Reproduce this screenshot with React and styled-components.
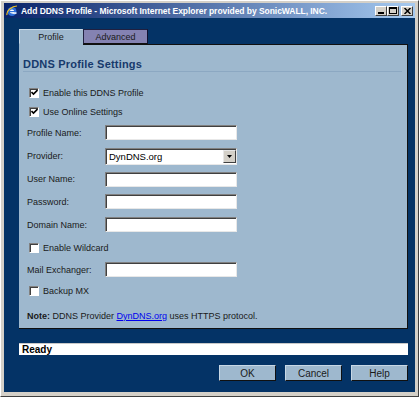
import styled, { createGlobalStyle } from "styled-components";

const GlobalStyle = createGlobalStyle`
    html, body {
        margin: 0;
        padding: 0;
        background: #d4d0c8;
    }
    body {
        font-family: "Liberation Sans", Arial, sans-serif;
        font-size: 9px;
        color: #1a1a1a;
    }
`

const Frame = styled.div`
    width: 419px;
    height: 397px;
    box-sizing: border-box;
    display: flex;
    flex-direction: column;
    background: #d4d0c8;
    padding: 2px 3px 4px 3px;
    border-top: 1px solid #ffffff;
    border-left: 1px solid #ffffff;
    border-right: 1px solid #404040;
    border-bottom: 1px solid #404040;
`

const TitleBar = styled.div`
    height: 15px;
    display: flex;
    align-items: center;
    background: linear-gradient(to right, #0a246a, #a6caf0);
    padding: 0 2px 0 2px;
    gap: 3px;
`

const TitleText = styled.div`
    flex: 1;
    color: #ffffff;
    font-weight: bold;
    font-size: 8.5px;
    letter-spacing: -0.05px;
    white-space: nowrap;
`

const WinButtons = styled.div`
    display: flex;
    align-items: center;
`

const WinButton = styled.div`
    width: 12px;
    height: 10px;
    box-sizing: border-box;
    background: #d4d0c8;
    border-top: 1px solid #ffffff;
    border-left: 1px solid #ffffff;
    border-right: 1px solid #404040;
    border-bottom: 1px solid #404040;
    margin-left: ${(props) => props.gap ? "2px" : "0"};
    display: flex;
    align-items: center;
    justify-content: center;
`

const Body = styled.div`
    flex: 1;
    background: #043366;
    padding: 11px 7px 0 15px;
    display: flex;
    flex-direction: column;
`

const Tabs = styled.div`
    display: flex;
    height: 15px;
`

const Tab = styled.div`
    width: ${(props) => props.w}px;
    box-sizing: border-box;
    display: flex;
    align-items: center;
    justify-content: center;
    padding-top: 1px;
    font-size: 9px;
    color: #1a1a1a;
    background: ${(props) => props.active ? "#9eb8ce" : "#8482b2"};
    border-top: 1px solid ${(props) => props.active ? "#c8d8e6" : "#202040"};
    border-left: 1px solid ${(props) => props.active ? "#c8d8e6" : "#202040"};
    border-right: 1px solid ${(props) => props.active ? "#9eb8ce" : "#101030"};
    border-bottom: 1px solid ${(props) => props.active ? "#9eb8ce" : "#101010"};
`

const Panel = styled.div`
    height: 285px;
    box-sizing: border-box;
    background: #9eb8ce;
    border-right: 1px solid #101010;
    border-bottom: 1px solid #101010;
    display: flex;
    flex-direction: column;
`

const PanelTopLine = styled.div`
    height: 1px;
    margin-left: 64px;
    background: #101010;
`

const Heading = styled.div`
    margin: 13px 5px 0 4px;
    height: 13px;
    border-bottom: 1px solid #8ca8c2;
    color: #173a6c;
    font-weight: bold;
    font-size: 11px;
    letter-spacing: 0.2px;
    line-height: 12px;
`

const Form = styled.div`
    margin-top: 11px;
    display: flex;
    flex-direction: column;
`

const Row = styled.div`
    height: ${(props) => props.h}px;
    display: flex;
    align-items: center;
    padding-left: ${(props) => props.check ? "10px" : "8px"};
    margin-top: ${(props) => props.mt || 0}px;
    white-space: pre;
`

const Check = styled.span`
    width: 10px;
    height: 10px;
    box-sizing: border-box;
    background: #ffffff;
    border-top: 1px solid #808080;
    border-left: 1px solid #808080;
    border-right: 1px solid #ffffff;
    border-bottom: 1px solid #ffffff;
    box-shadow: inset 1px 1px 0 #404040;
    display: flex;
    align-items: center;
    justify-content: center;
    margin-right: 4px;
`

const Label = styled.span`
    width: 78px;
    flex-shrink: 0;
`

const Input = styled.div`
    width: 132px;
    height: 15px;
    box-sizing: border-box;
    background: #ffffff;
    border-top: 1px solid #808080;
    border-left: 1px solid #808080;
    border-right: 1px solid #e8e8e8;
    border-bottom: 1px solid #e8e8e8;
    box-shadow: inset 1px 1px 0 #404040;
`

const Select = styled(Input)`
    height: 17px;
    display: flex;
    align-items: center;
    padding-left: 3px;
    font-size: 9.5px;
    color: #000;
`

const SelectValue = styled.span`
    flex: 1;
`

const SelectArrow = styled.span`
    width: 13px;
    height: 13px;
    box-sizing: border-box;
    background: #d4d0c8;
    border-top: 1px solid #e8e8e8;
    border-left: 1px solid #e8e8e8;
    border-right: 1px solid #404040;
    border-bottom: 1px solid #404040;
    display: flex;
    align-items: center;
    justify-content: center;
`

const Link = styled.a`
    color: #0000ee;
    text-decoration: underline;
`

const StatusBar = styled.div`
    margin-top: 14px;
    height: 11px;
    background: #ffffff;
    border-top: 1px solid #c8c8c8;
    display: flex;
    align-items: center;
    padding-left: 3px;
    font-size: 10px;
    font-weight: bold;
    color: #000;
`

const ButtonRow = styled.div`
    margin-top: 10px;
    display: flex;
    justify-content: flex-end;
    gap: 9px;
`

const Button = styled.div`
    width: 57px;
    height: 16px;
    box-sizing: border-box;
    background: #9eb8ce;
    border-top: 1px solid #c8d8e6;
    border-left: 1px solid #c8d8e6;
    border-right: 1px solid #101010;
    border-bottom: 1px solid #101010;
    display: flex;
    align-items: center;
    justify-content: center;
    font-size: 10px;
    color: #1a1a1a;
`

function CheckMark() {
    return (
        <svg width="7" height="7" viewBox="0 0 7 7">
            <path d="M0.5 3 L2.5 5 L6.5 1" stroke="#000" strokeWidth="1.6" fill="none" />
        </svg>
    )
}

function CheckRow({ checked, label, h, mt }) {
    return (
        <Row check h={h} mt={mt}>
            <Check>{checked && <CheckMark />}</Check>
            {label}
        </Row>
    )
}

function FieldRow({ label, h, children }) {
    return (
        <Row h={h}>
            <Label>{label}</Label>
            {children || <Input />}
        </Row>
    )
}

function IeIcon() {
    return (
        <svg width="12" height="12" viewBox="0 0 12 12">
            <ellipse cx="6" cy="6.5" rx="4.5" ry="4.5" fill="#2f6fd8" />
            <ellipse cx="6" cy="6.5" rx="2.2" ry="2" fill="#ffffff" />
            <rect x="2.5" y="6" width="7" height="1.2" fill="#2f6fd8" />
            <rect x="6.5" y="7.3" width="4" height="1.5" fill="#ffffff" />
            <path d="M1 10 C0 6 6 1 11 1" stroke="#f0c020" strokeWidth="1.2" fill="none" />
        </svg>
    )
}

export default function App() {
    return (
        <>
            <GlobalStyle />
            <Frame>
                <TitleBar>
                    <IeIcon />
                    <TitleText>Add DDNS Profile - Microsoft Internet Explorer provided by SonicWALL, INC.</TitleText>
                    <WinButtons>
                        <WinButton>
                            <svg width="6" height="6" viewBox="0 0 6 6"><rect x="0" y="4" width="6" height="2" fill="#000" /></svg>
                        </WinButton>
                        <WinButton>
                            <svg width="8" height="7" viewBox="0 0 8 7"><rect x="0.5" y="0.5" width="7" height="6" fill="none" stroke="#000" /><rect x="0" y="0" width="8" height="2" fill="#000" /></svg>
                        </WinButton>
                        <WinButton gap>
                            <svg width="7" height="6" viewBox="0 0 7 6"><path d="M0.5 0 L6.5 6 M6.5 0 L0.5 6" stroke="#000" strokeWidth="1.5" /></svg>
                        </WinButton>
                    </WinButtons>
                </TitleBar>
                <Body>
                    <Tabs>
                        <Tab active w={64}>Profile</Tab>
                        <Tab w={65}>Advanced</Tab>
                    </Tabs>
                    <Panel>
                        <PanelTopLine />
                        <Heading>DDNS Profile Settings</Heading>
                        <Form>
                            <CheckRow checked label="Enable this DDNS Profile" h={19} />
                            <CheckRow checked label="Use Online Settings" h={19} />
                            <FieldRow label="Profile Name:" h={23} />
                            <FieldRow label="Provider:" h={24}>
                                <Select>
                                    <SelectValue>DynDNS.org</SelectValue>
                                    <SelectArrow>
                                        <svg width="5" height="3" viewBox="0 0 5 3"><path d="M0 0 H5 L2.5 3 Z" fill="#000" /></svg>
                                    </SelectArrow>
                                </Select>
                            </FieldRow>
                            <FieldRow label="User Name:" h={22} />
                            <FieldRow label="Password:" h={23} />
                            <FieldRow label="Domain Name:" h={23} />
                            <CheckRow label="Enable Wildcard" h={23} />
                            <FieldRow label="Mail Exchanger:" h={21} />
                            <CheckRow label="Backup MX" h={21} />
                            <Row h={21} mt={4}>
                                <b>Note:</b>{" DDNS Provider "}<Link href="#">DynDNS.org</Link>{" uses HTTPS protocol."}
                            </Row>
                        </Form>
                    </Panel>
                    <StatusBar>Ready</StatusBar>
                    <ButtonRow>
                        <Button>OK</Button>
                        <Button>Cancel</Button>
                        <Button>Help</Button>
                    </ButtonRow>
                </Body>
            </Frame>
        </>
    )
}
